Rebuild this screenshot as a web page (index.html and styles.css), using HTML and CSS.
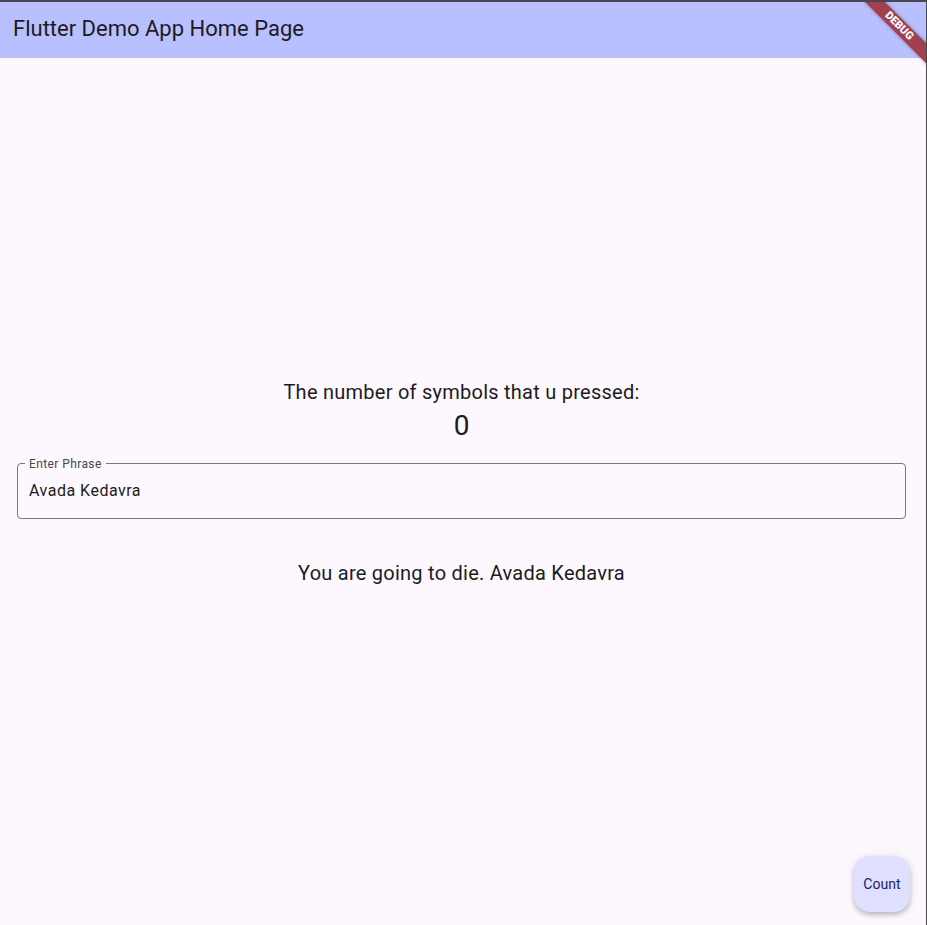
FILE: index.html
```html
<!DOCTYPE html>
<html lang="en">
<head>
<meta charset="utf-8">
<title>Flutter Demo App Home Page</title>
<link rel="stylesheet" href="styles.css">
</head>
<body>
<div class="frame">
  <header class="appbar">
    <h1 class="title">Flutter Demo App Home Page</h1>
  </header>
  <main class="content">
    <p class="label-text">The number of symbols that u pressed:</p>
    <p class="counter">0</p>
    <div class="field">
      <span class="field-label">Enter Phrase</span>
      <div class="field-input">Avada Kedavra</div>
    </div>
    <p class="result">You are going to die. Avada Kedavra</p>
  </main>
  <button class="fab" type="button">Count</button>
  <div class="banner"><div class="banner-strip">DEBUG</div></div>
</div>
</body>
</html>
```

FILE: styles.css
```css
html, body {
  margin: 0;
  padding: 0;
  background: #48484c;
}
body {
  font-family: Roboto, "Noto Sans", sans-serif;
  color: #1d1b20;
}
.frame {
  position: relative;
  box-sizing: border-box;
  width: 927px;
  height: 925px;
  border-top: 2px solid #48484c;
  border-right: 1px solid #48484c;
  background: #fcf8fe;
  overflow: hidden;
}
.appbar {
  box-sizing: border-box;
  height: 56px;
  background: #b9c0ff;
  padding: 13px 0 0 13px;
}
.title {
  margin: 0;
  font-size: 22px;
  line-height: 28px;
  font-weight: 400;
  color: #1d1b20;
}
.content {
  display: flex;
  flex-direction: column;
  align-items: center;
  padding: 322px 3px 0 0;
}
.label-text {
  margin: 0;
  font-size: 20px;
  line-height: 24px;
  letter-spacing: 0.25px;
}
.counter {
  margin: 4px 0 0;
  font-size: 28px;
  line-height: 36px;
}
.field {
  position: relative;
  align-self: stretch;
  box-sizing: border-box;
  margin: 19px 17px 0;
  height: 56px;
  border: 1px solid #79747e;
  border-radius: 4px;
  padding: 15px 11px;
}
.field-label {
  position: absolute;
  left: 7px;
  top: -8px;
  padding: 0 4px;
  background: #fcf8fe;
  font-size: 12px;
  line-height: 16px;
  letter-spacing: 0.4px;
  color: #49454f;
}
.field-input {
  font-size: 16px;
  line-height: 24px;
  letter-spacing: 0.5px;
  color: #1d1b20;
}
.result {
  margin: 42px 0 0;
  font-size: 20px;
  line-height: 24px;
  letter-spacing: 0.25px;
}
.fab {
  position: absolute;
  right: 16px;
  bottom: 13px;
  width: 56px;
  height: 56px;
  border: 0;
  border-radius: 16px;
  background: #dfe0ff;
  color: #1a1b6e;
  font-family: Roboto, "Noto Sans", sans-serif;
  font-size: 14px;
  font-weight: 400;
  letter-spacing: 0.1px;
  padding: 0;
  box-shadow: 0 3px 5px rgba(0,0,0,0.2), 0 1px 10px rgba(0,0,0,0.1);
}
.banner {
  position: absolute;
  top: 0;
  right: 0;
  width: 62px;
  height: 64px;
  overflow: hidden;
  pointer-events: none;
}
.banner-strip {
  position: absolute;
  left: -25px;
  top: 17px;
  width: 120px;
  height: 14px;
  transform: rotate(45deg);
  background: #a2404f;
  color: #fff;
  font-family: Roboto, "Noto Sans", sans-serif;
  font-size: 11px;
  font-weight: 900;
  line-height: 14px;
  text-align: center;
  box-shadow: 0 0 4px rgba(0,0,0,0.35);
}
```
